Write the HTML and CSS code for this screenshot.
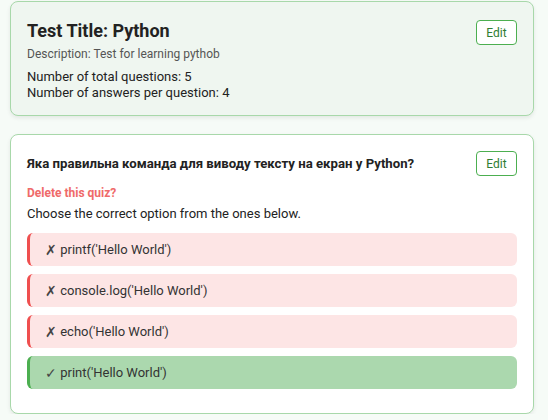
FILE: index.html
```html
<!DOCTYPE html>
<html>
<head>
<meta charset="utf-8">
<link rel="stylesheet" href="styles.css">
</head>
<body>
<div class="page">
  <section class="card card-info">
    <div class="card-head">
      <div class="info">
        <h1 class="title">Test Title: Python</h1>
        <p class="desc">Description: Test for learning pythob</p>
        <p class="stat">Number of total questions: 5</p>
        <p class="stat">Number of answers per question: 4</p>
      </div>
      <button class="edit">Edit</button>
    </div>
  </section>
  <section class="card card-quiz">
    <div class="card-head center">
      <h2 class="question">Яка правильна команда для виводу тексту на екран у Python?</h2>
      <button class="edit">Edit</button>
    </div>
    <a class="delete">Delete this quiz?</a>
    <p class="hint">Choose the correct option from the ones below.</p>
    <ul class="options">
      <li class="option wrong"><span class="mark">✗</span> printf('Hello World')</li>
      <li class="option wrong"><span class="mark">✗</span> console.log('Hello World')</li>
      <li class="option wrong"><span class="mark">✗</span> echo('Hello World')</li>
      <li class="option right"><span class="mark">✓</span> print('Hello World')</li>
    </ul>
  </section>
</div>
</body>
</html>
```
FILE: styles.css
```css
html, body {
  margin: 0;
  padding: 0;
  background: #f6fbf7;
  font-family: Roboto, "Noto Sans", Arial, sans-serif;
  color: #222;
}
.page {
  padding: 1px 14px 0 10px;
  display: flex;
  flex-direction: column;
  gap: 18px;
}
.card {
  border: 1px solid #a8d8aa;
  border-radius: 8px;
  box-shadow: 0 2px 4px rgba(0,0,0,0.08);
}
.card-info {
  background: #eff6f0;
  padding: 17px 16px 14px 16px;
}
.card-quiz {
  background: #ffffff;
  padding: 16px 16px 24px 16px;
}
.card-head {
  display: flex;
  justify-content: space-between;
  align-items: flex-start;
}
.card-head.center {
  align-items: center;
}
.title {
  margin: 0;
  font-size: 18px;
  font-weight: 700;
  line-height: 24px;
  color: #222;
}
.desc {
  margin: 3px 0 7px;
  font-size: 12px;
  line-height: 16px;
  color: #555;
}
.stat {
  margin: 0;
  font-size: 13px;
  line-height: 16px;
  color: #222;
}
.edit {
  border: 1px solid #4caf50;
  background: #fff;
  color: #2e7d32;
  border-radius: 4px;
  font-family: inherit;
  font-size: 12px;
  width: 41px;
  height: 25px;
  padding: 0;
  margin-top: 1px;
}
.card-head.center .edit {
  margin-top: 0;
}
.question {
  margin: 0;
  font-size: 13.2px;
  font-weight: 700;
  line-height: 16px;
  color: #222;
}
.delete {
  display: block;
  margin-top: 9px;
  font-size: 12px;
  font-weight: 700;
  color: #ef6a6a;
  line-height: 16px;
}
.hint {
  margin: 5px 0 0;
  font-size: 13px;
  line-height: 16px;
  color: #222;
}
.options {
  list-style: none;
  margin: 11px 0 0;
  padding: 0;
  display: flex;
  flex-direction: column;
  gap: 8px;
}
.option {
  height: 33px;
  box-sizing: border-box;
  display: flex;
  align-items: center;
  padding-left: 15px;
  border-radius: 6px;
  font-size: 13px;
  color: #333;
  white-space: pre;
}
.mark {
  font-family: "DejaVu Sans ExtraLight", "DejaVu Sans", sans-serif;
  font-weight: 200;
  font-size: 14px;
  color: #444;
}
.wrong {
  background: #fde5e5;
  border-left: 3px solid #ef4f4f;
}
.right {
  background: #abd8ae;
  border-left: 3px solid #4caf50;
}
```
